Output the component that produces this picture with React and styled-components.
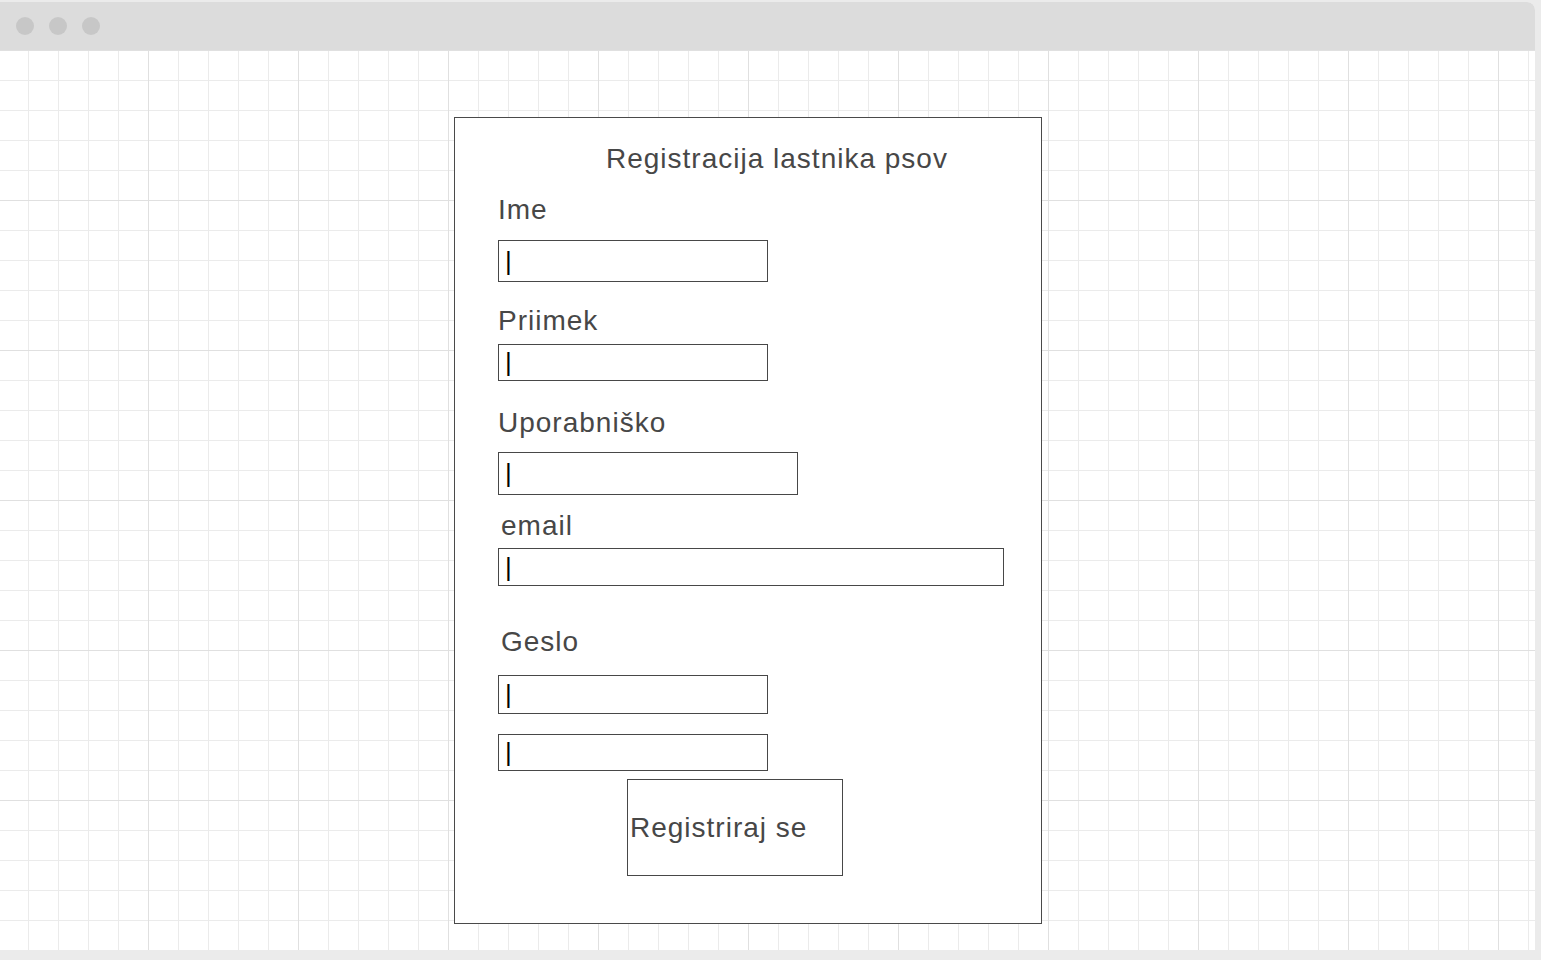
import styled, { createGlobalStyle } from 'styled-components';

const GlobalStyle = createGlobalStyle`
  html, body { margin:0; padding:0; background-color:#ebebeb; }
  body { font-family:"Liberation Sans", Arial, sans-serif; }
`;

// browser window frame
const Window = styled.div`
  width:1535px; height:948px; margin-top:2px; display:flex; flex-direction:column;
  background-color:white; border-top-right-radius:8px; overflow:hidden;
`;
const TitleBar = styled.div`
  height:48px; flex-shrink:0; display:flex; align-items:center; gap:15px; padding-left:16px;
  background-color:#dcdcdc;
`;
const Dot = styled.span`
  width:18px; height:18px; border-radius:50%; background-color:#c7c7c7;
`;
const Canvas = styled.div`
  flex:1; padding:67px 0 0 454px;
  background-color:#ffffff;
  background-image:
    linear-gradient(to right, #e0e0e0 1px, transparent 1px),
    linear-gradient(to bottom, #e0e0e0 1px, transparent 1px),
    linear-gradient(to right, #ebebeb 1px, transparent 1px),
    linear-gradient(to bottom, #ebebeb 1px, transparent 1px);
  background-size:150px 150px, 150px 150px, 30px 30px, 30px 30px;
  background-position:148px 0, 0 150px, 28px 0, 0 30px;
`;

// registration card
const Panel = styled.form`
  box-sizing:border-box; width:588px; height:807px; border:1px solid #4a4a4a; background-color:white;
  padding:25px 0 0 43px; display:flex; flex-direction:column; align-items:flex-start;
  color:#474747; font-size:28px; line-height:32px; letter-spacing:1px;
`;
const Title = styled.h1`
  margin:0 0 0 108px; font-size:28px; font-weight:normal; line-height:32px; white-space:nowrap;
`;
const Label = styled.label`
  display:block; margin-top:${p => p.$top}px; margin-left:${p => p.$indent || 0}px;
`;
const Field = styled.div`
  width:${p => p.$w}px; height:${p => p.$h}px; margin-top:${p => p.$top}px;
  box-sizing:border-box; border:1px solid #474747; background-color:white;
  display:flex; align-items:center; padding:0 0 1px 6px;
`;
const Caret = styled.span`
  color:#000; font-size:26px; line-height:26px; letter-spacing:0;
`;
const Submit = styled.button`
  width:216px; height:97px; margin:8px 0 0 129px; padding:0 0 0 2px;
  box-sizing:border-box; border:1px solid #474747; background-color:white;
  color:#474747; font-family:"Liberation Sans", Arial, sans-serif; font-size:28px; line-height:32px;
  letter-spacing:1px; text-align:left; cursor:pointer;
`;

const fields = [
  { label: "Ime", labelTop: 19, inputTop: 14, w: 270, h: 42 },
  { label: "Priimek", labelTop: 23, inputTop: 7, w: 270, h: 37 },
  { label: "Uporabniško", labelTop: 26, inputTop: 13, w: 300, h: 43 },
  { label: "email", labelTop: 15, inputTop: 6, w: 506, h: 38, indent: 3 },
];

function App() {
  return (
    <>
      <GlobalStyle/>
      <Window>
        <TitleBar>
          <Dot/><Dot/><Dot/>
        </TitleBar>
        <Canvas>
          <Panel onSubmit={(e) => e.preventDefault()}>
            <Title>Registracija lastnika psov</Title>
            {fields.map((f) => (
              <div key={f.label}>
                <Label $top={f.labelTop} $indent={f.indent}>{f.label}</Label>
                <Field $w={f.w} $h={f.h} $top={f.inputTop}><Caret>|</Caret></Field>
              </div>
            ))}
            <Label $top={40} $indent={3}>Geslo</Label>
            <Field $w={270} $h={39} $top={17}><Caret>|</Caret></Field>
            <Field $w={270} $h={37} $top={20}><Caret>|</Caret></Field>
            <Submit type="submit">Registriraj se</Submit>
          </Panel>
        </Canvas>
      </Window>
    </>
  );
}

export default App;
